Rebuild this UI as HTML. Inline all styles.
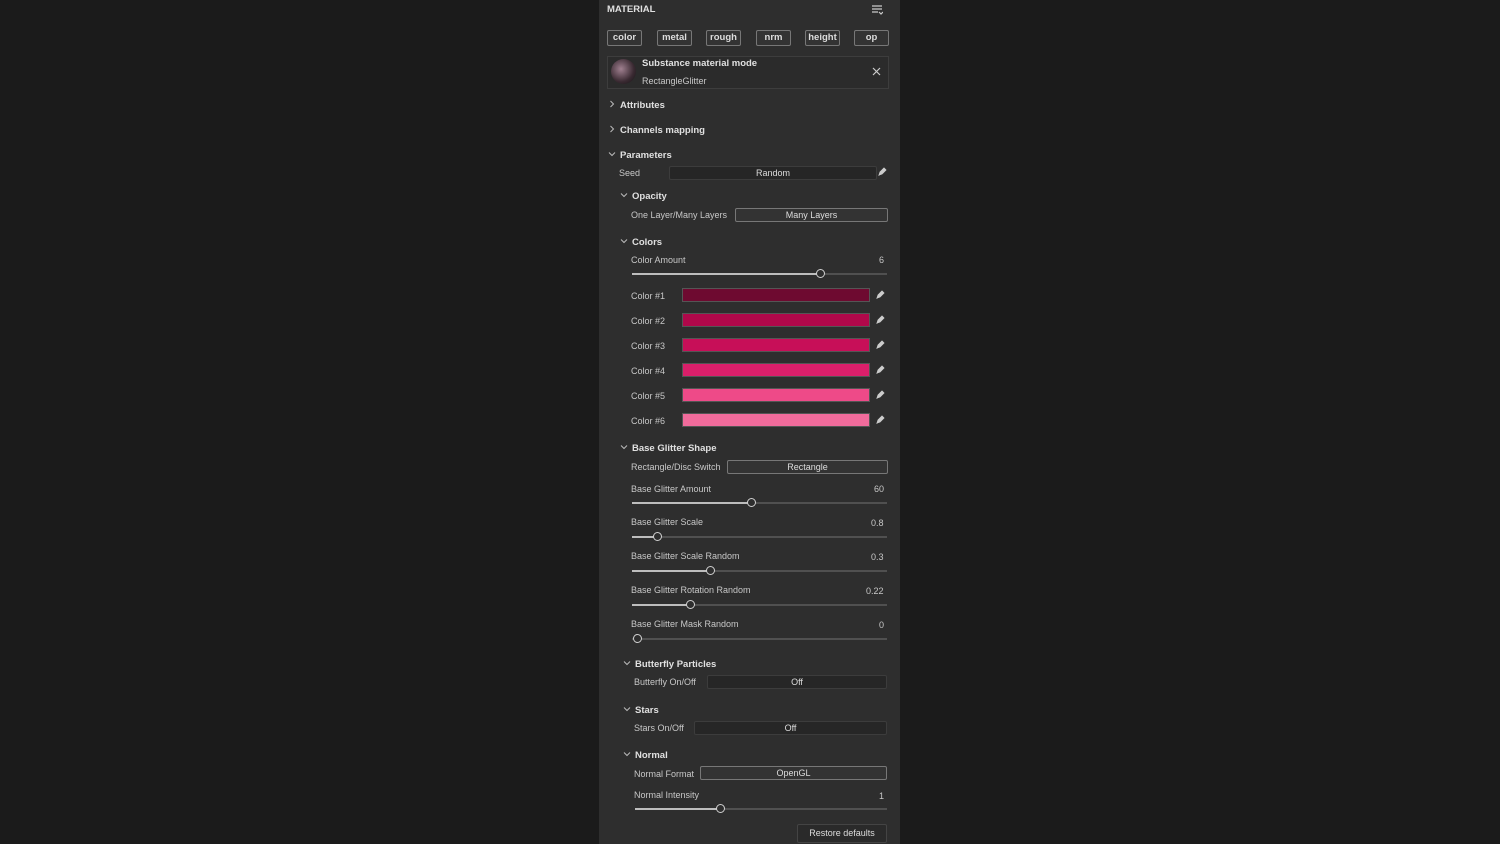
<!DOCTYPE html><html><head><style>
body{margin:0;width:1500px;height:844px;background:#1b1b1b;overflow:hidden;font-family:"Liberation Sans",sans-serif;}
#p{position:absolute;left:599px;top:0;width:301px;height:844px;background:#2e2e2e;}
.a{position:absolute;white-space:nowrap}
.t{font-size:9px;color:#c8c8c8}
.h{font-size:9.5px;color:#e0e0e0;font-weight:bold}
.btn{position:absolute;height:14px;border:1px solid #777;border-radius:2px;background:#333;color:#ddd;font-size:9.5px;font-weight:bold;text-align:center;line-height:14px}
.fld{position:absolute;height:12px;border:1px solid #3c3c3c;background:#262626;color:#ddd;font-size:9px;text-align:center;line-height:12px;border-radius:2px}
.fld.b{border-color:#777;background:#333}
.tr{position:absolute;height:2px;background:#505050}
.fi{position:absolute;height:2px;background:#bdbdbd}
.k{position:absolute;width:7px;height:7px;border:1.5px solid #d0d0d0;border-radius:50%;background:#2e2e2e}
.sw{position:absolute;left:682px;width:186px;height:12px;border:1px solid #555}
.cd,.cr{position:absolute;width:8px;height:8px}
</style></head><body>
<div id="p"></div>
<svg width="0" height="0" style="position:absolute"><defs>
<symbol id="d" viewBox="0 0 8 8"><path d="M1 2.5l3 3 3-3" stroke="#bbb" fill="none" stroke-width="1"/></symbol>
<symbol id="r" viewBox="0 0 8 8"><path d="M2.5 1l3 3-3 3" stroke="#bbb" fill="none" stroke-width="1"/></symbol>
<symbol id="pen" viewBox="0 0 10 10"><path d="M2 8l1-3 4-4 2 2-4 4z M1.5 8.5l1-0.5" stroke="#ccc" fill="#ccc" stroke-width="0.8"/></symbol>
</defs></svg>
<div class="a h" style="left:607px;top:4px;font-size:9.5px">MATERIAL</div>
<svg class="a" style="left:871px;top:4px" width="12" height="12"><path d="M1 2h10M1 5h10M1 8h6M8 8l2 2 2-2" stroke="#ccc" fill="none" stroke-width="1.2"/></svg>
<div class="btn" style="left:607px;top:30px;width:33px">color</div>
<div class="btn" style="left:657px;top:30px;width:33px">metal</div>
<div class="btn" style="left:706px;top:30px;width:33px">rough</div>
<div class="btn" style="left:756px;top:30px;width:33px">nrm</div>
<div class="btn" style="left:805px;top:30px;width:33px">height</div>
<div class="btn" style="left:854px;top:30px;width:33px">op</div>
<div class="a" style="left:607px;top:56px;width:280px;height:31px;border:1px solid #3d3d3d;background:#2b2b2b"></div>
<div class="a" style="left:611px;top:59px;width:25px;height:25px;border-radius:50%;background:radial-gradient(circle at 40% 40%,#a08090,#3a2a32 60%,#111)"></div>
<div class="a h" style="left:642px;top:58px">Substance material mode</div>
<div class="a t" style="left:642px;top:76px">RectangleGlitter</div>
<svg class="a" style="left:872px;top:67px" width="9" height="9"><path d="M1 1l7 7M8 1l-7 7" stroke="#ccc" stroke-width="1.2"/></svg>
<svg class="cr" style="left:608px;top:100px"><use href="#r"/></svg><div class="a h" style="left:620px;top:100px">Attributes</div>
<svg class="cr" style="left:608px;top:125px"><use href="#r"/></svg><div class="a h" style="left:620px;top:125px">Channels mapping</div>
<svg class="cd" style="left:608px;top:150px"><use href="#d"/></svg><div class="a h" style="left:620px;top:150px">Parameters</div>
<div class="a t" style="left:619px;top:168px">Seed</div>
<div class="fld" style="left:669px;top:166px;width:206px">Random</div>
<svg class="a" style="left:877px;top:167px" width="10" height="10"><use href="#pen"/></svg>
<svg class="cd" style="left:620px;top:191px"><use href="#d"/></svg><div class="a h" style="left:632px;top:191px">Opacity</div>
<div class="a t" style="left:631px;top:210px">One Layer/Many Layers</div>
<div class="fld b" style="left:735px;top:208px;width:151px">Many Layers</div>
<svg class="cd" style="left:620px;top:237px"><use href="#d"/></svg><div class="a h" style="left:632px;top:237px">Colors</div>
<div class="a t" style="left:631px;top:255px">Color Amount</div><div class="a t" style="left:879px;top:255px">6</div>
<div class="tr" style="left:632px;top:273px;width:255px"></div><div class="fi" style="left:632px;top:273px;width:186px"></div><div class="k" style="left:816px;top:269px"></div>
<div class="a t" style="left:631px;top:291px">Color #1</div><div class="sw" style="top:288px;background:#6e0a30"></div>
<div class="a t" style="left:631px;top:316px">Color #2</div><div class="sw" style="top:313px;background:#b0084a"></div>
<div class="a t" style="left:631px;top:341px">Color #3</div><div class="sw" style="top:338px;background:#c70f58"></div>
<div class="a t" style="left:631px;top:366px">Color #4</div><div class="sw" style="top:363px;background:#da1f6a"></div>
<div class="a t" style="left:631px;top:391px">Color #5</div><div class="sw" style="top:388px;background:#ee4a88"></div>
<div class="a t" style="left:631px;top:416px">Color #6</div><div class="sw" style="top:413px;background:#f06b9b"></div>
<svg class="a" style="left:875px;top:290px" width="10" height="10"><use href="#pen"/></svg>
<svg class="a" style="left:875px;top:315px" width="10" height="10"><use href="#pen"/></svg>
<svg class="a" style="left:875px;top:340px" width="10" height="10"><use href="#pen"/></svg>
<svg class="a" style="left:875px;top:365px" width="10" height="10"><use href="#pen"/></svg>
<svg class="a" style="left:875px;top:390px" width="10" height="10"><use href="#pen"/></svg>
<svg class="a" style="left:875px;top:415px" width="10" height="10"><use href="#pen"/></svg>
<svg class="cd" style="left:620px;top:443px"><use href="#d"/></svg><div class="a h" style="left:632px;top:443px">Base Glitter Shape</div>
<div class="a t" style="left:631px;top:462px">Rectangle/Disc Switch</div>
<div class="fld b" style="left:727px;top:460px;width:159px">Rectangle</div>
<div class="a t" style="left:631px;top:484px">Base Glitter Amount</div><div class="a t" style="left:874px;top:484px">60</div>
<div class="tr" style="left:632px;top:502px;width:255px"></div><div class="fi" style="left:632px;top:502px;width:117px"></div><div class="k" style="left:747px;top:498px"></div>
<div class="a t" style="left:631px;top:517px">Base Glitter Scale</div><div class="a t" style="left:871px;top:518px">0.8</div>
<div class="tr" style="left:632px;top:536px;width:255px"></div><div class="fi" style="left:632px;top:536px;width:23px"></div><div class="k" style="left:653px;top:532px"></div>
<div class="a t" style="left:631px;top:551px">Base Glitter Scale Random</div><div class="a t" style="left:871px;top:552px">0.3</div>
<div class="tr" style="left:632px;top:570px;width:255px"></div><div class="fi" style="left:632px;top:570px;width:76px"></div><div class="k" style="left:706px;top:566px"></div>
<div class="a t" style="left:631px;top:585px">Base Glitter Rotation Random</div><div class="a t" style="left:866px;top:586px">0.22</div>
<div class="tr" style="left:632px;top:604px;width:255px"></div><div class="fi" style="left:632px;top:604px;width:56px"></div><div class="k" style="left:686px;top:600px"></div>
<div class="a t" style="left:631px;top:619px">Base Glitter Mask Random</div><div class="a t" style="left:879px;top:620px">0</div>
<div class="tr" style="left:632px;top:638px;width:255px"></div><div class="k" style="left:633px;top:634px"></div>
<svg class="cd" style="left:623px;top:659px"><use href="#d"/></svg><div class="a h" style="left:635px;top:659px">Butterfly Particles</div>
<div class="a t" style="left:634px;top:677px">Butterfly On/Off</div>
<div class="fld" style="left:707px;top:675px;width:178px">Off</div>
<svg class="cd" style="left:623px;top:705px"><use href="#d"/></svg><div class="a h" style="left:635px;top:705px">Stars</div>
<div class="a t" style="left:634px;top:723px">Stars On/Off</div>
<div class="fld" style="left:694px;top:721px;width:191px">Off</div>
<svg class="cd" style="left:623px;top:750px"><use href="#d"/></svg><div class="a h" style="left:635px;top:750px">Normal</div>
<div class="a t" style="left:634px;top:769px">Normal Format</div>
<div class="fld b" style="left:700px;top:766px;width:185px">OpenGL</div>
<div class="a t" style="left:634px;top:790px">Normal Intensity</div><div class="a t" style="left:879px;top:791px">1</div>
<div class="tr" style="left:635px;top:808px;width:252px"></div><div class="fi" style="left:635px;top:808px;width:83px"></div><div class="k" style="left:716px;top:804px"></div>
<div class="fld" style="left:797px;top:824px;width:88px;height:17px;line-height:17px;border-color:#444;background:#2a2a2a">Restore defaults</div>
</body></html>
